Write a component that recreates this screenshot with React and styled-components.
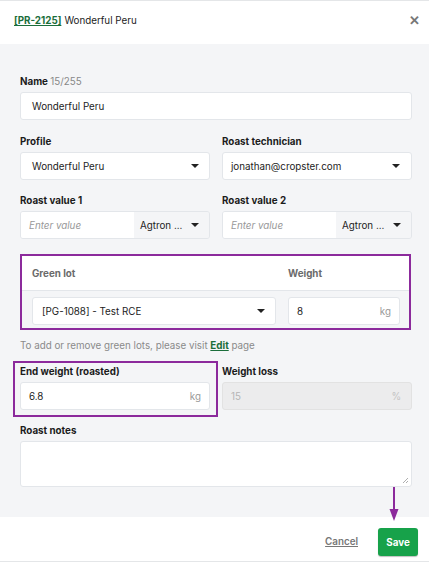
import React from "react";
import styled, { createGlobalStyle } from "styled-components";

const Global = createGlobalStyle`
  html, body { margin: 0; padding: 0; background: #fff; }
  body { font-family: Inter, "Noto Sans", "Liberation Sans", sans-serif; color: #1c1c1c; font-size: 9.8px; }
  * { box-sizing: border-box; }
`;

const Modal = styled.div`
  width: 429px;
  height: 562px;
  display: flex;
  flex-direction: column;
  border-top: 1px solid #e4e6e8;
  position: relative;
`;

const Header = styled.div`
  height: 43px;
  display: flex;
  align-items: center;
  justify-content: space-between;
  padding: 0 9px 5px 14px;
`;

const Code = styled.a`
  color: #1b6e3b;
  font-weight: 700;
  text-decoration: underline;
  margin-right: 3px;
`;

const Close = styled.span`
  color: #777;
  font-size: 13px;
  font-weight: 700;
  line-height: 1;
`;

const Body = styled.div`
  flex: 1;
  background: #f4f5f7;
  padding: 30px 17px 0 20px;
  display: flex;
  flex-direction: column;
`;

const Row = styled.div`
  display: grid;
  grid-template-columns: 1fr 1fr;
  gap: 12px;
  margin-bottom: ${(p) => p.mb ?? 13}px;
`;

const Field = styled.div`
  position: relative;
  margin-bottom: ${(p) => p.mb ?? 0}px;
  ${(p) =>
    p.highlight &&
    `&::after {
      content: "";
      position: absolute;
      top: -3px; left: -7px; right: -8px; bottom: -7px;
      border: 2px solid #8c2a9c;
      pointer-events: none;
    }`}
`;

const Label = styled.div`
  font-weight: 700;
  color: #1c1c1c;
  padding-top: 2px;
  margin-bottom: 4px;
  line-height: 12px;
`;

const Counter = styled.span`
  font-weight: 400;
  color: #888;
`;

const Box = styled.div`
  height: 28px;
  display: flex;
  align-items: center;
  background: ${(p) => (p.disabled ? "#ececed" : "#fff")};
  border: 1px solid ${(p) => (p.disabled ? "#e2e2e2" : "#e3e6ea")};
  border-radius: 3px;
  padding: 0 ${(p) => p.pr ?? 8}px 0 ${(p) => p.pl ?? 8}px;
  color: ${(p) => (p.disabled ? "#b5b5b5" : "#1c1c1c")};
  overflow: hidden;
`;

const Grow = styled.span`
  flex: 1;
  white-space: nowrap;
`;

const Unit = styled.span`
  color: ${(p) => (p.disabled ? "#c4c4c4" : "#999")};
`;

const Caret = styled.span`
  width: 0;
  height: 0;
  border-left: 4px solid transparent;
  border-right: 4px solid transparent;
  border-top: 4px solid #222;
  margin-left: 8px;
`;

const Split = styled.div`
  height: 28px;
  display: flex;
  border: 1px solid #e3e6ea;
  border-radius: 3px;
  overflow: hidden;
`;

const SplitInput = styled.div`
  flex: 1;
  background: #fff;
  display: flex;
  align-items: center;
  padding: 0 8px;
  color: #999;
  font-style: italic;
`;

const SplitSelect = styled.div`
  width: 75px;
  background: #f4f5f7;
  display: flex;
  align-items: center;
  padding: 0 10px 0 6px;
  color: #1c1c1c;
  justify-content: space-between;
  white-space: nowrap;
`;

const LotTable = styled.div`
  border: 2px solid #8c2a9c;
  margin: 2px 1px 0 0;
  background: #f4f5f7;
`;

const LotHead = styled.div`
  display: grid;
  grid-template-columns: 1fr 112px;
  gap: 12px;
  background: #fff;
  padding: 0 9px 0 10px;
  height: 35px;
  align-items: center;
  border-bottom: 1px solid #e3e6ea;
  font-weight: 700;
  color: #6b6b6b;
`;

const LotRow = styled.div`
  display: grid;
  grid-template-columns: 1fr 112px;
  gap: 12px;
  padding: 6px 9px 3px 10px;
`;

const Hint = styled.div`
  color: #8a8a8a;
  margin: 10px 0 12px;
  line-height: 12px;
`;

const HintLink = styled.a`
  color: #1b6e3b;
  font-weight: 700;
  text-decoration: underline;
`;

const Notes = styled.div`
  height: 46px;
  background: #fff;
  border: 1px solid #e3e6ea;
  border-radius: 3px;
  position: relative;
`;

const Grip = styled.svg`
  position: absolute;
  right: 2px;
  bottom: 2px;
`;

const Footer = styled.div`
  height: 45px;
  display: flex;
  align-items: flex-start;
  justify-content: flex-end;
  gap: 20px;
  padding: 11px 11px 0 0;
  border-bottom: 1px solid #e4e6e8;
`;

const Cancel = styled.a`
  color: #777;
  font-weight: 600;
  text-decoration: underline;
  line-height: 28px;
`;

const Save = styled.button`
  background: #17a24a;
  color: #fff;
  border: none;
  border-radius: 3px;
  height: 28px;
  width: 40px;
  font-family: inherit;
  font-weight: 700;
  font-size: 9.8px;
  padding: 0;
  box-shadow: 0 1px 1px rgba(0, 0, 0, 0.25);
`;

const Arrow = styled.svg`
  position: absolute;
  left: 389px;
  top: 486px;
`;

export default function App() {
  return (
    <>
      <Global />
      <Modal>
        <Header>
          <div>
            <Code>[PR-2125]</Code>Wonderful Peru
          </div>
          <Close>✕</Close>
        </Header>
        <Body>
          <Field mb={14}>
            <Label>
              Name <Counter>15/255</Counter>
            </Label>
            <Box pl={11}>
              <Grow>Wonderful Peru</Grow>
            </Box>
          </Field>
          <Row>
            <Field>
              <Label>Profile</Label>
              <Box pl={11} pr={10}>
                <Grow>Wonderful Peru</Grow>
                <Caret />
              </Box>
            </Field>
            <Field>
              <Label>Roast technician</Label>
              <Box pr={11}>
                <Grow>jonathan@cropster.com</Grow>
                <Caret />
              </Box>
            </Field>
          </Row>
          <Row mb={13}>
            <Field>
              <Label>Roast value 1</Label>
              <Split>
                <SplitInput>Enter value</SplitInput>
                <SplitSelect>
                  Agtron ...
                  <Caret />
                </SplitSelect>
              </Split>
            </Field>
            <Field>
              <Label>Roast value 2</Label>
              <Split>
                <SplitInput>Enter value</SplitInput>
                <SplitSelect>
                  Agtron ...
                  <Caret />
                </SplitSelect>
              </Split>
            </Field>
          </Row>
          <LotTable>
            <LotHead>
              <span>Green lot</span>
              <span>Weight</span>
            </LotHead>
            <LotRow>
              <Box pl={9} pr={10}>
                <Grow>[PG-1088] - Test RCE</Grow>
                <Caret />
              </Box>
              <Box>
                <Grow>8</Grow>
                <Unit>kg</Unit>
              </Box>
            </LotRow>
          </LotTable>
          <Hint>
            To add or remove green lots, please visit <HintLink>Edit</HintLink> page
          </Hint>
          <Row mb={13}>
            <Field highlight>
              <Label>End weight (roasted)</Label>
              <Box>
                <Grow>6.8</Grow>
                <Unit>kg</Unit>
              </Box>
            </Field>
            <Field>
              <Label>Weight loss</Label>
              <Box disabled pr={10}>
                <Grow>15</Grow>
                <Unit disabled>%</Unit>
              </Box>
            </Field>
          </Row>
          <Field>
            <Label>Roast notes</Label>
            <Notes>
              <Grip width="7" height="7" viewBox="0 0 7 7">
                <path d="M1 6 L6 1 M4 6 L6 4" stroke="#999" strokeWidth="0.8" />
              </Grip>
            </Notes>
          </Field>
        </Body>
        <Footer>
          <Cancel>Cancel</Cancel>
          <Save>Save</Save>
        </Footer>
        <Arrow width="10" height="34" viewBox="0 0 10 34">
          <line x1="5" y1="0" x2="5" y2="24" stroke="#8c2a9c" strokeWidth="2" />
          <path d="M0.5 22 L9.5 22 L5 34 Z" fill="#8c2a9c" />
        </Arrow>
      </Modal>
    </>
  );
}
